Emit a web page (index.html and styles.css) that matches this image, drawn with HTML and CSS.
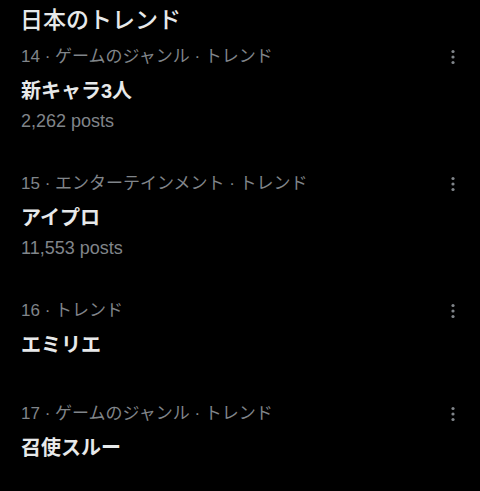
FILE: index.html
```html
<!DOCTYPE html>
<html lang="ja">
<head>
<meta charset="utf-8">
<link rel="stylesheet" href="styles.css">
</head>
<body>
<div class="panel">
  <h2 class="heading">日本のトレンド</h2>
  <div class="trend">
    <div class="meta-row">
      <span class="meta">14 · ゲームのジャンル · トレンド</span>
      <svg class="more" viewBox="0 0 18 18" width="18" height="18"><circle cx="9" cy="3.5" r="1.6"/><circle cx="9" cy="9" r="1.6"/><circle cx="9" cy="14.5" r="1.6"/></svg>
    </div>
    <div class="name">新キャラ3人</div>
    <div class="posts">2,262 posts</div>
  </div>
  <div class="trend">
    <div class="meta-row">
      <span class="meta">15 · エンターテインメント · トレンド</span>
      <svg class="more" viewBox="0 0 18 18" width="18" height="18"><circle cx="9" cy="3.5" r="1.6"/><circle cx="9" cy="9" r="1.6"/><circle cx="9" cy="14.5" r="1.6"/></svg>
    </div>
    <div class="name">アイプロ</div>
    <div class="posts">11,553 posts</div>
  </div>
  <div class="trend trend-short">
    <div class="meta-row">
      <span class="meta">16 · トレンド</span>
      <svg class="more" viewBox="0 0 18 18" width="18" height="18"><circle cx="9" cy="3.5" r="1.6"/><circle cx="9" cy="9" r="1.6"/><circle cx="9" cy="14.5" r="1.6"/></svg>
    </div>
    <div class="name">エミリエ</div>
  </div>
  <div class="trend trend-short">
    <div class="meta-row">
      <span class="meta">17 · ゲームのジャンル · トレンド</span>
      <svg class="more" viewBox="0 0 18 18" width="18" height="18"><circle cx="9" cy="3.5" r="1.6"/><circle cx="9" cy="9" r="1.6"/><circle cx="9" cy="14.5" r="1.6"/></svg>
    </div>
    <div class="name">召使スルー</div>
  </div>
</div>
</body>
</html>
```

FILE: styles.css
```css
html, body {
  margin: 0;
  padding: 0;
  background: #000;
  height: 100%;
  overflow: hidden;
}
body {
  font-family: "Liberation Sans", "Noto Sans CJK JP", sans-serif;
  color: #e7e9ea;
}
.panel {
  padding: 5px 18px 0 20px;
}
.heading {
  margin: 0;
  font-size: 23px;
  line-height: 30px;
  font-weight: 500;
  color: #e7e9ea;
}
.trend {
  padding-top: 10px;
  padding-bottom: 31px;
}
.trend-short {
  padding-bottom: 33px;
}
.meta-row {
  display: flex;
  align-items: center;
  justify-content: space-between;
  height: 24px;
}
.meta {
  font-size: 17px;
  line-height: 24px;
  color: #80858a;
  padding-left: 1px;
}
.more {
  fill: #80858a;
}
.name {
  margin-top: 8px;
  font-size: 20px;
  line-height: 28px;
  font-weight: 700;
  color: #e7e9ea;
  padding-left: 1px;
}
.posts {
  margin-top: 6px;
  font-size: 18px;
  line-height: 20px;
  color: #80858a;
  padding-left: 1px;
}
```
